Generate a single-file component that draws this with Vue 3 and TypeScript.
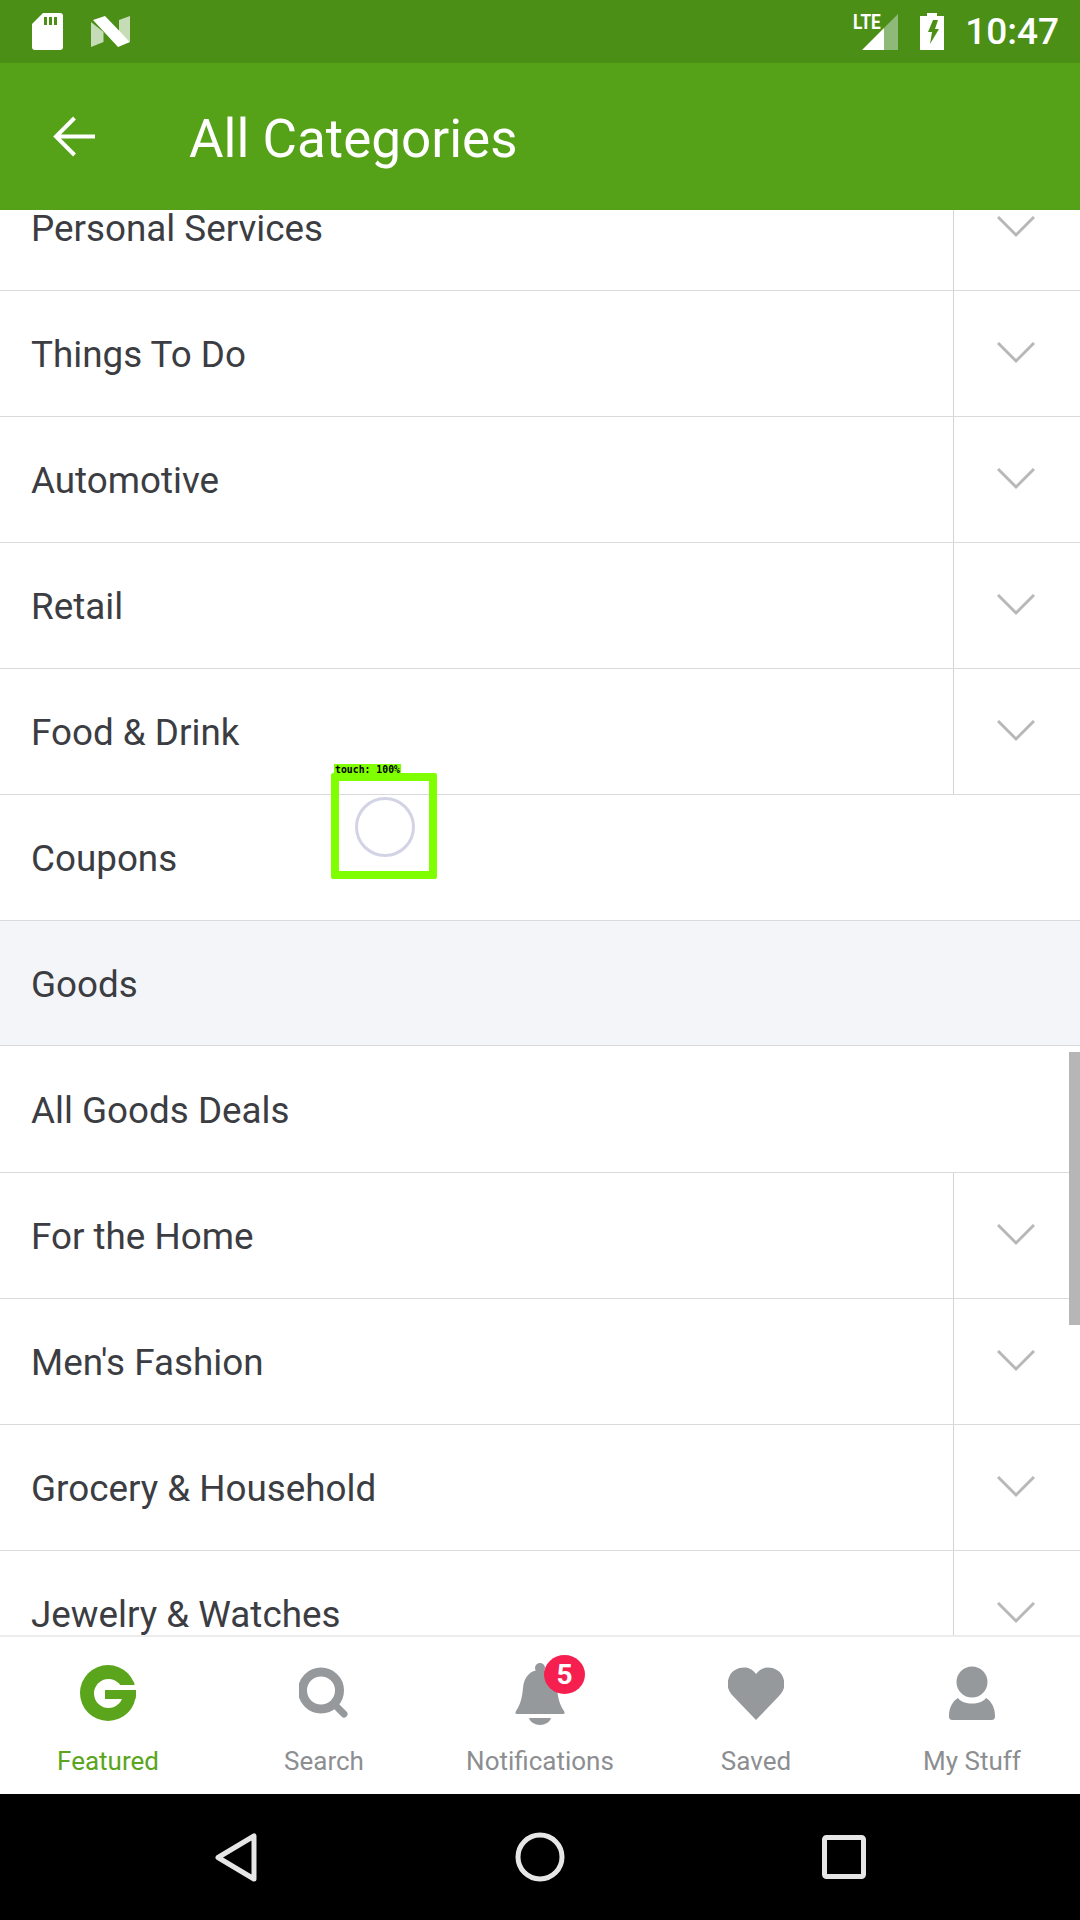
<script setup lang="ts">
interface Row {
  title: string;
  chevron?: boolean;
  section?: boolean;
}

const rows: Row[] = [
  { title: "Personal Services", chevron: true },
  { title: "Things To Do", chevron: true },
  { title: "Automotive", chevron: true },
  { title: "Retail", chevron: true },
  { title: "Food & Drink", chevron: true },
  { title: "Coupons" },
  { title: "Goods", section: true },
  { title: "All Goods Deals" },
  { title: "For the Home", chevron: true },
  { title: "Men's Fashion", chevron: true },
  { title: "Grocery & Household", chevron: true },
  { title: "Jewelry & Watches", chevron: true },
];
</script>

<template>
  <div class="screen">
    <div class="status">
      <div class="status-left">
        <svg class="sd" width="31" height="37" viewBox="0 0 31 37">
          <path fill="#fff" d="M11 0h17a3 3 0 0 1 3 3v31a3 3 0 0 1-3 3H3a3 3 0 0 1-3-3V11z" />
          <path fill="#4b8f17" d="M12 4h3v8h-3zM17 4h3v8h-3zM22 4h3v8h-3z" />
        </svg>
        <svg width="39" height="31" viewBox="0 0 39 31">
          <path fill="#c6dcb6" d="M0 6v25l12.5-5V16zM28 4l11-4v26l-11-10z" />
          <path fill="#fff" d="M2 4 14 0l25 26-12 5z" />
        </svg>
      </div>
      <div class="status-right">
        <div class="signal">
          <span class="lte">LTE</span>
          <svg width="36" height="36" viewBox="0 0 36 36">
            <path fill="#8fb978" d="M36 0v36H22V14z" />
            <path fill="#fff" d="M22 14v22H0z" />
          </svg>
        </div>
        <svg class="battery" width="24" height="37" viewBox="0 0 24 37">
          <path fill="#fff" d="M7 0h10v3h7v34H0V3h7z" />
          <path fill="#4b8f17" d="M13 7h5l-3 9h4l-9 15 2-12H8z" />
        </svg>
        <span class="time">10:47</span>
      </div>
    </div>

    <header class="toolbar">
      <svg class="back" width="42" height="41" viewBox="0 0 42 41">
        <path fill="none" stroke="#fff" stroke-width="4" d="M42 20.5H4M21.5 2 3 20.5 21.5 39" />
      </svg>
      <h1>All Categories</h1>
    </header>

    <main class="list">
      <div class="rows">
        <div v-for="row in rows" :key="row.title" class="row" :class="{ section: row.section }">
          <span class="label">{{ row.title }}</span>
          <div v-if="row.chevron" class="more">
            <svg width="38" height="22" viewBox="0 0 38 22">
              <path fill="none" stroke="#b8b8ba" stroke-width="3" d="M1 1l18 18L37 1" />
            </svg>
          </div>
        </div>
      </div>
      <div class="scrollbar"></div>
    </main>

    <nav class="tabs">
      <div class="tab active">
        <div class="icon">
          <svg width="56" height="56" viewBox="0 0 56 56">
            <circle cx="28" cy="28" r="28" fill="#5aa51b" />
            <circle cx="28.500" cy="28.500" r="14.500" fill="#fff" />
            <rect x="28" y="20" width="28" height="5" fill="#fff" />
            <path fill="#5aa51b" d="M25 25h31v2a28 28 0 0 1-.7 7H25z" />
          </svg>
        </div>
        <span>Featured</span>
      </div>
      <div class="tab">
        <div class="icon">
          <svg width="50" height="52" viewBox="0 0 50 52">
            <circle cx="22" cy="23.500" r="18.500" fill="none" stroke="#96999c" stroke-width="9" />
            <path fill="none" stroke="#96999c" stroke-width="7" stroke-linecap="round" d="M36 38l9 9" />
          </svg>
        </div>
        <span>Search</span>
      </div>
      <div class="tab">
        <div class="icon">
          <svg width="50" height="64" viewBox="0 0 50 64">
            <circle cx="25" cy="7" r="5" fill="#96999c" />
            <path fill="#96999c" d="M25 9c-10 0-16 7-17 18-1 11-3 17-7 23-1 2-1 3 1 3h46c2 0 2-1 1-3-4-6-6-12-7-23-1-11-7-18-17-18z" />
            <path fill="#96999c" d="M14 57h22c-1 4-6 7-11 7s-10-3-11-7z" />
          </svg>
          <span class="badge">5</span>
        </div>
        <span>Notifications</span>
      </div>
      <div class="tab">
        <div class="icon">
          <svg width="56" height="53" viewBox="0 0 56 53">
            <path fill="#96999c" d="M28 53 5 29C-1 23-2 16 2 8 6 1 20-4 28 7c8-11 22-6 26 1 4 8 3 15-3 21z" />
          </svg>
        </div>
        <span>Saved</span>
      </div>
      <div class="tab">
        <div class="icon">
          <svg width="46" height="54" viewBox="0 0 46 54">
            <circle cx="23" cy="16" r="15.500" fill="#96999c" />
            <path fill="#96999c" d="M9 32c3 4 8 5.500 14 5.500S34 36 37 32c5 3 9 9 9 18 0 3-1 4-4 4H4c-3 0-4-1-4-4 0-9 4-15 9-18z" />
          </svg>
        </div>
        <span>My Stuff</span>
      </div>
    </nav>

    <div class="system">
      <svg width="42" height="49" viewBox="0 0 42 49">
        <path fill="none" stroke="#e6e6e6" stroke-width="5" stroke-linejoin="round" d="M39 3v43L3 24.500z" />
      </svg>
      <svg width="50" height="50" viewBox="0 0 50 50">
        <circle cx="25" cy="25" r="22" fill="none" stroke="#e6e6e6" stroke-width="5" />
      </svg>
      <svg width="44" height="44" viewBox="0 0 44 44">
        <rect x="2.500" y="2.500" width="39" height="39" rx="2" fill="none" stroke="#e6e6e6" stroke-width="5" />
      </svg>
    </div>

    <div class="touch-box">
      <span class="touch-tag">touch: 100%</span>
      <div class="touch-dot"></div>
    </div>
  </div>
</template>

<style scoped>
.screen {
  position: relative;
  width: 1080px;
  height: 1920px;
  display: flex;
  flex-direction: column;
  overflow: hidden;
  background: #fff;
  font-family: Roboto, sans-serif;
}
.status {
  height: 63px;
  flex: none;
  display: flex;
  align-items: center;
  justify-content: space-between;
  padding: 0 21px 0 32px;
  background: #4b8f17;
  color: #fff;
}
.status-left {
  display: flex;
  align-items: center;
  gap: 28px;
}
.status-right {
  display: flex;
  align-items: center;
}
.signal {
  position: relative;
  width: 36px;
  height: 36px;
  margin-right: 22px;
}
.lte {
  position: absolute;
  top: -2px;
  left: -9px;
  font-size: 21px;
  line-height: 20px;
  font-weight: 700;
  transform: scaleX(0.82);
  transform-origin: left center;
}
.battery {
  margin-right: 21px;
}
.time {
  font-size: 37px;
  font-weight: 500;
  line-height: 1;
}
.toolbar {
  height: 147px;
  flex: none;
  display: flex;
  align-items: center;
  background: #55a118;
  color: #fff;
  padding-left: 53px;
}
.back {
  margin-right: 94px;
}
.toolbar h1 {
  margin: 5px 0 0;
  font-size: 53px;
  font-weight: 400;
}
.list {
  position: relative;
  flex: 1;
  overflow: hidden;
}
.rows {
  margin-top: -45px;
}
.row {
  height: 126px;
  box-sizing: border-box;
  display: flex;
  align-items: stretch;
  border-bottom: 1px solid #dadadc;
  color: #3b3d42;
}
.row.section {
  height: 125px;
  background: #f4f5f8;
}
.row.section + .row {
  height: 127px;
}
.label {
  flex: 1;
  display: flex;
  align-items: center;
  padding: 2px 0 0 31px;
  font-size: 36.800px;
}
.more {
  width: 127px;
  flex: none;
  box-sizing: border-box;
  border-left: 1px solid #d4d4d7;
  display: flex;
  align-items: center;
  justify-content: center;
  padding: 0 3px 2px 0;
}
.scrollbar {
  position: absolute;
  top: 842px;
  right: 0;
  width: 11px;
  height: 273px;
  background: #b6b6b6;
}
.tabs {
  height: 159px;
  flex: none;
  box-sizing: border-box;
  display: grid;
  grid-template-columns: repeat(5, 1fr);
  background: #fff;
  border-top: 2px solid #ececec;
}
.tab {
  display: flex;
  flex-direction: column;
  align-items: center;
  color: #8c8e91;
  font-size: 26px;
  line-height: 30px;
}
.tab.active {
  color: #5aa51b;
}
.icon {
  position: relative;
  height: 64px;
  margin: 24px 0 21px;
  display: flex;
  align-items: center;
  justify-content: center;
}
.badge {
  position: absolute;
  top: -6px;
  left: 29px;
  width: 41px;
  height: 39px;
  border-radius: 50%;
  background: #f5204f;
  color: #fff;
  font-size: 28px;
  font-weight: 700;
  line-height: 39px;
  text-align: center;
}
.system {
  height: 126px;
  flex: none;
  background: #000;
  display: grid;
  grid-template-columns: 236px 1fr 1fr 236px;
  align-items: center;
}
.system svg:nth-child(1) {
  grid-column: 1;
  justify-self: end;
  margin-right: -21px;
}
.system svg:nth-child(2) {
  grid-column: 2 / 4;
  justify-self: center;
}
.system svg:nth-child(3) {
  grid-column: 4;
  margin-left: -22px;
}
.touch-box {
  position: absolute;
  left: 331px;
  top: 773px;
  width: 106px;
  height: 106px;
  box-sizing: border-box;
  border: 8px solid #7fff00;
  border-radius: 2px;
  display: flex;
  align-items: center;
  justify-content: center;
}
.touch-tag {
  position: absolute;
  left: -5px;
  top: -17px;
  width: 67px;
  height: 11px;
  background: #7fff00;
  color: #000;
  font-family: "DejaVu Sans Mono", monospace;
  font-size: 9.800px;
  font-weight: 700;
  line-height: 11px;
  white-space: nowrap;
  text-align: center;
}
.touch-dot {
  width: 60px;
  height: 60px;
  box-sizing: border-box;
  border-radius: 50%;
  border: 3px solid #d3d3e6;
  transform: translate(1px, 1px);
}
</style>
